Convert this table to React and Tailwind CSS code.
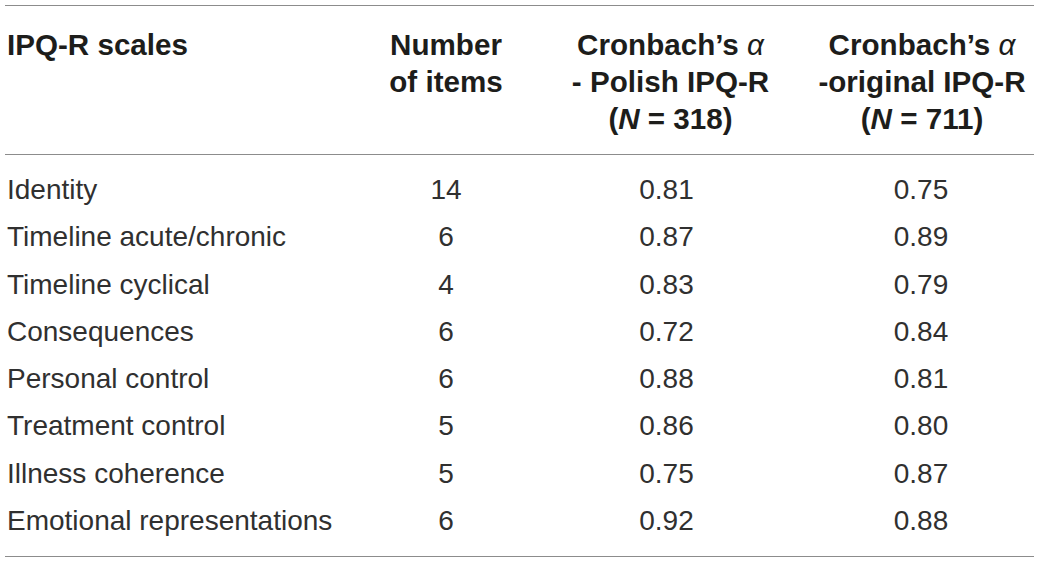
export default function App() {
  const rows = [
    ["Identity", "14", "0.81", "0.75"],
    ["Timeline acute/chronic", "6", "0.87", "0.89"],
    ["Timeline cyclical", "4", "0.83", "0.79"],
    ["Consequences", "6", "0.72", "0.84"],
    ["Personal control", "6", "0.88", "0.81"],
    ["Treatment control", "5", "0.86", "0.80"],
    ["Illness coherence", "5", "0.75", "0.87"],
    ["Emotional representations", "6", "0.92", "0.88"],
  ];
  const grid = "grid grid-cols-[370px_142px_299px_218px]";
  return (
    <div
      className="w-[1040px] h-[564px] bg-white pt-[5px] pl-[5px]"
      style={{ fontFamily: '"Liberation Sans", Arial, sans-serif' }}
    >
      <div className="w-[1029px] border-t-[1.5px] border-b-[1.5px] border-[#8c8c8c]">
        <div
          className={`${grid} border-b-[1.5px] border-[#8c8c8c] pt-[20px] pb-[17px] text-[29.6px] leading-[37px] font-bold text-[#1d1d1b]`}
        >
          <div className="pl-[2px]">IPQ-R scales</div>
          <div className="text-center">
            Number
            <br />
            of items
          </div>
          <div className="text-center pl-[8px]">
            Cronbach’s <span className="font-normal italic">α</span>
            <br />- Polish IPQ-R
            <br />(<span className="italic">N</span> = 318)
          </div>
          <div className="text-center pr-[6px]">
            Cronbach’s <span className="font-normal italic">α</span>
            <br />
            -original IPQ-R
            <br />(<span className="italic">N</span> = 711)
          </div>
        </div>
        <div className="pt-[11px] pb-[12px] text-[28px] leading-[47.3px] text-[#303030]">
          {rows.map((r) => (
            <div key={r[0]} className={grid}>
              <div className="pl-[2px]">{r[0]}</div>
              <div className="text-center">{r[1]}</div>
              <div className="text-center">{r[2]}</div>
              <div className="text-center pr-[8px]">{r[3]}</div>
            </div>
          ))}
        </div>
      </div>
    </div>
  );
}
